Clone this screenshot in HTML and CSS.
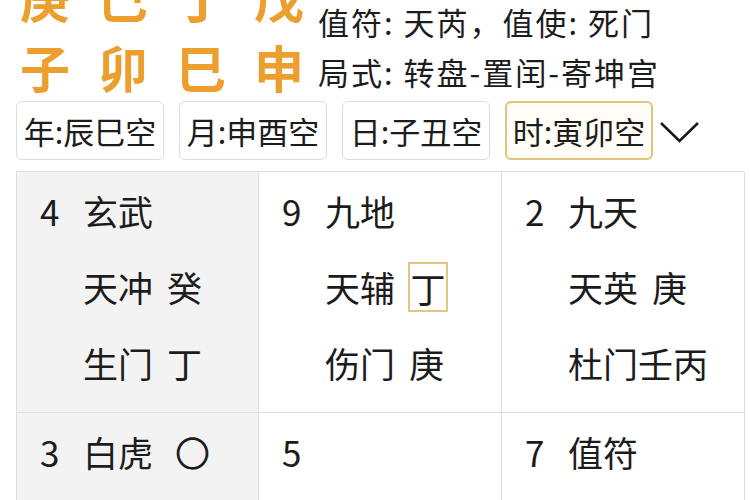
FILE: index.html
```html
<!DOCTYPE html>
<html lang="zh">
<head>
<meta charset="utf-8">
<link rel="stylesheet" href="styles.css">
</head>
<body>
<div class="header">
  <div class="pillars">
    <div class="pillar-row">庚巳丁戊</div>
    <div class="pillar-row">子卯巳申</div>
  </div>
  <div class="info">
    <div class="info-line">值符: 天芮，值使: 死门</div>
    <div class="info-line">局式: 转盘-置闰-寄坤宫</div>
  </div>
</div>
<div class="tabs">
  <div class="tab">年:辰巳空</div>
  <div class="tab">月:申酉空</div>
  <div class="tab">日:子丑空</div>
  <div class="tab tab-active">时:寅卯空</div>
  <svg class="chevron" width="44" height="28" viewBox="0 0 44 28"><path d="M3 5 L21.5 23 L40 5" fill="none" stroke="#1a1a1a" stroke-width="2.6"/></svg>
</div>
<div class="grid">
  <div class="cell cell-gray">
    <div class="line"><span class="num">4</span>玄武</div>
    <div class="line indent">天冲<span class="gan">癸</span></div>
    <div class="line indent">生门<span class="gan">丁</span></div>
  </div>
  <div class="cell">
    <div class="line"><span class="num">9</span>九地</div>
    <div class="line indent">天辅<span class="gan boxed">丁</span></div>
    <div class="line indent">伤门<span class="gan">庚</span></div>
  </div>
  <div class="cell">
    <div class="line"><span class="num">2</span>九天</div>
    <div class="line indent">天英<span class="gan">庚</span></div>
    <div class="line indent">杜门壬丙</div>
  </div>
  <div class="cell cell-gray">
    <div class="line"><span class="num">3</span>白虎<span class="gan circle">〇</span></div>
  </div>
  <div class="cell">
    <div class="line"><span class="num">5</span></div>
  </div>
  <div class="cell">
    <div class="line"><span class="num">7</span>值符</div>
  </div>
</div>
</body>
</html>
```
FILE: styles.css
```css
* { box-sizing: border-box; }
html, body {
  margin: 0;
  padding: 0;
  background: #ffffff;
  overflow: hidden;
}
body {
  width: 750px;
  height: 500px;
  font-family: "Noto Sans CJK SC", "Noto Sans", sans-serif;
  color: #1c1c1c;
}
.header {
  display: flex;
  height: 101px;
  overflow: hidden;
}
.pillars {
  width: 318px;
  flex: none;
  padding-left: 20px;
  margin-top: -39px;
}
.pillar-row {
  font-size: 50px;
  line-height: 70px;
  font-weight: bold;
  letter-spacing: 28px;
  color: #ec9f2e;
  white-space: nowrap;
}
.info {
  margin-top: -3px;
}
.info-line {
  font-size: 31px;
  line-height: 50px;
  letter-spacing: 2px;
  white-space: nowrap;
}
.tabs {
  display: flex;
  align-items: center;
  gap: 15px;
  padding-left: 16px;
}
.tab {
  width: 148px;
  height: 59px;
  border: 1.5px solid #dcdcdc;
  border-radius: 6px;
  display: flex;
  align-items: center;
  justify-content: center;
  font-size: 31px;
  white-space: nowrap;
  background: #fff;
}
.tab-active {
  border: 2px solid #e3c47c;
  background: #fffdf6;
}
.chevron {
  margin-left: -10px;
  margin-top: 2px;
}
.grid {
  margin-top: 11px;
  margin-left: 16px;
  width: 728px;
  display: grid;
  grid-template-columns: 242px 243px 243px;
  grid-template-rows: 241px 120px;
  border-top: 1.5px solid #dedede;
  border-left: 1.5px solid #dedede;
}
.cell {
  border-right: 1.5px solid #dedede;
  border-bottom: 1.5px solid #dedede;
  padding: 1px 0 0 23px;
  background: #fff;
}
.cell-gray {
  background: #f3f3f3;
}
.line {
  font-size: 35px;
  line-height: 76px;
  height: 76px;
  white-space: nowrap;
  display: flex;
  align-items: center;
}
.num {
  display: inline-block;
  width: 43px;
  font-size: 35px;
}
.indent {
  padding-left: 43px;
}
.gan {
  margin-left: 14px;
}
.boxed {
  display: inline-flex;
  align-items: center;
  justify-content: center;
  width: 40px;
  height: 50px;
  border: 2px solid #e6c584;
  line-height: 1;
  margin-left: 13px;
}
.circle {
  margin-left: 22px;
}
```
